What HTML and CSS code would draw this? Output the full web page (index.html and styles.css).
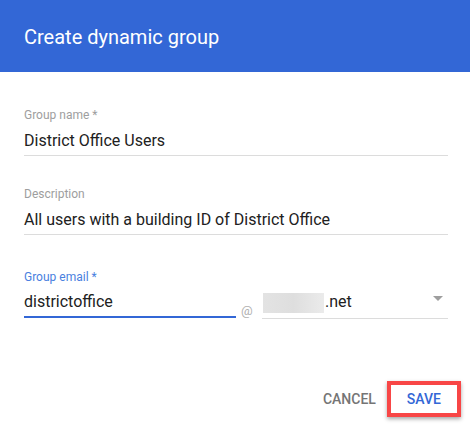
FILE: index.html
```html
<!DOCTYPE html>
<html>
<head>
<meta charset="utf-8">
<link rel="stylesheet" href="styles.css">
</head>
<body>
<div class="dialog">
  <header class="header"><h1 class="title">Create dynamic group</h1></header>
  <div class="content">
    <div class="field field-first">
      <div class="label">Group name *</div>
      <div class="value">District Office Users</div>
    </div>
    <div class="field field-second">
      <div class="label">Description</div>
      <div class="value">All users with a building ID of District Office</div>
    </div>
    <div class="field field-third">
      <div class="label label-active">Group email *</div>
      <div class="email-row">
        <div class="value value-active">districtoffice</div>
        <div class="at">@</div>
        <div class="domain">
          <span class="blurred"></span><span class="domain-text">.net</span>
          <span class="caret"></span>
        </div>
      </div>
    </div>
  </div>
  <div class="actions">
    <button class="btn btn-cancel">Cancel</button>
    <button class="btn btn-save">Save<span class="highlight"></span></button>
  </div>
</div>
</body>
</html>
```

FILE: styles.css
```css
html, body {
  margin: 0;
  padding: 0;
  background: #ffffff;
}
body {
  font-family: Roboto, "Liberation Sans", Arial, sans-serif;
  color: #212121;
}
.dialog {
  width: 470px;
  height: 426px;
  background: #ffffff;
  overflow: hidden;
}
.header {
  height: 72px;
  background: #3367d6;
  display: flex;
  align-items: center;
  padding: 0 24px;
  box-sizing: border-box;
}
.title {
  margin: 0;
  font-size: 20px;
  font-weight: 400;
  color: #ffffff;
  line-height: 28px;
  padding-top: 2px;
}
.content {
  padding: 0 22px 0 24px;
}
.field-first { margin-top: 35px; }
.field-second { margin-top: 30px; }
.field-third { margin-top: 34px; }
.label {
  font-size: 12px;
  line-height: 16px;
  color: #9e9e9e;
}
.label-active {
  color: #4a7fe0;
}
.value {
  margin-top: 6px;
  font-size: 16px;
  line-height: 24px;
  padding-bottom: 2px;
  border-bottom: 1px solid #dcdcdc;
  white-space: nowrap;
}
.email-row {
  display: flex;
  align-items: flex-end;
  margin-top: 5px;
}
.value-active {
  margin-top: 0;
  width: 212px;
  flex: none;
  border-bottom: 2px solid #3367d6;
}
.at {
  flex: none;
  width: 26px;
  box-sizing: border-box;
  padding-left: 5px;
  font-size: 13px;
  line-height: 16px;
  color: #b0b0b0;
  margin-bottom: -1px;
}
.domain {
  flex: 1;
  display: flex;
  align-items: center;
  height: 24px;
  padding-bottom: 4px;
  border-bottom: 1px solid #dcdcdc;
  font-size: 16px;
  line-height: 24px;
  margin-bottom: -1px;
}
.blurred {
  display: inline-block;
  width: 61px;
  height: 20px;
  margin-left: 1px;
  margin-top: 2px;
  background: linear-gradient(90deg, #e3e3e3 0%, #dedede 50%, #ebebeb 100%);
}
.domain-text {
  margin-left: 1px;
  color: #212121;
}
.caret {
  margin-left: auto;
  margin-right: 5px;
  margin-bottom: 8px;
  width: 0;
  height: 0;
  border-left: 5px solid transparent;
  border-right: 5px solid transparent;
  border-top: 5px solid #9e9e9e;
}
.actions {
  display: flex;
  justify-content: flex-end;
  margin-top: 63px;
  padding-right: 13px;
}
.btn {
  position: relative;
  border: none;
  background: transparent;
  font-family: Roboto, "Liberation Sans", Arial, sans-serif;
  font-size: 14px;
  font-weight: 500;
  text-transform: uppercase;
  line-height: 36px;
  height: 36px;
  padding: 0 8px;
  margin: 0;
}
.btn-cancel {
  color: #757575;
  margin-right: 7px;
}
.btn-save {
  color: #3367d6;
  padding: 0 16px;
}
.highlight {
  position: absolute;
  top: 0;
  bottom: 0;
  left: -4px;
  right: -4px;
  border: 4px solid #f84646;
  box-shadow: 0 2px 4px rgba(0, 0, 0, 0.35);
}
```
